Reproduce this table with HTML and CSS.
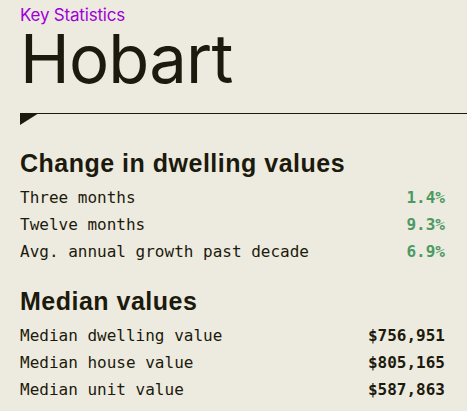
FILE: index.html
```html
<!DOCTYPE html>
<html lang="en">
<head>
    <meta charset="UTF-8">
    <title>Key Statistics - Hobart</title>
    <link rel="stylesheet" href="styles.css">
</head>
<body>
    <div class="page">
        <div class="eyebrow">Key Statistics</div>
        <h1 class="city">Hobart</h1>
        <div class="rule">
            <svg class="rule-flag" width="19" height="12" viewBox="0 0 19 12"><polygon points="0,0 19,0 0,12" fill="#1c1a0c"/></svg>
        </div>

        <div class="section section-first">
            <h2>Change in dwelling values</h2>
            <div class="stat-row"><span class="label">Three months</span><span class="value up">1.4%</span></div>
            <div class="stat-row"><span class="label">Twelve months</span><span class="value up">9.3%</span></div>
            <div class="stat-row"><span class="label">Avg. annual growth past decade</span><span class="value up">6.9%</span></div>
        </div>

        <div class="section">
            <h2>Median values</h2>
            <div class="stat-row"><span class="label">Median dwelling value</span><span class="value">$756,951</span></div>
            <div class="stat-row"><span class="label">Median house value</span><span class="value">$805,165</span></div>
            <div class="stat-row"><span class="label">Median unit value</span><span class="value">$587,863</span></div>
        </div>
    </div>
</body>
</html>
```

FILE: styles.css
```css
body { margin: 0; background: #edeadf; color: #1c1a0c; font-family: Inter, "Liberation Sans", sans-serif; }
.page { padding: 4px 0 0 20px; }
.eyebrow { font-size: 17px; line-height: 22px; color: #a000d8; letter-spacing: -0.2px; }
.city { margin: 0; font-size: 67px; font-weight: 400; line-height: 65px; letter-spacing: -0.8px; }
.rule { position: relative; border-top: 1.5px solid #1c1a0c; margin-top: 22px; height: 0; }
.rule-flag { position: absolute; left: 0; top: -1px; display: block; }
.section { padding-right: 22px; margin-top: 21px; }
.section-first { margin-top: 34px; }
.section h2 { margin: 0 0 6px; font-family: "Liberation Sans", Arial, sans-serif; font-size: 25px; font-weight: 700; letter-spacing: 0.5px; line-height: 30px; }
.stat-row { display: flex; justify-content: space-between; font-family: "DejaVu Sans Mono", monospace; font-size: 16px; line-height: 27px; }
.value { font-weight: 700; }
.value.up { color: #4b9a63; }
```
